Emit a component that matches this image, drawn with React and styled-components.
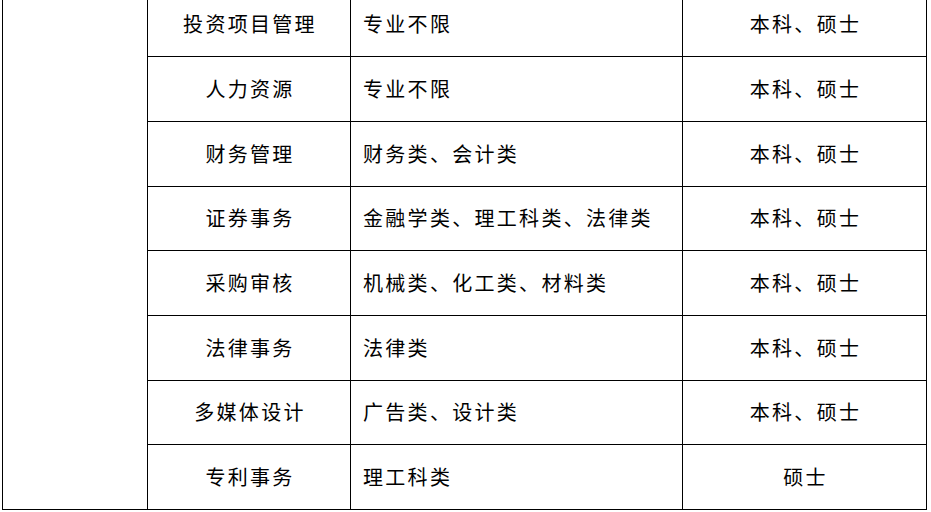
import React from 'react';
import styled, { createGlobalStyle } from "styled-components";

const rows = [
    { job: '投资项目管理', major: '专业不限', degree: '本科、硕士', h: 65 },
    { job: '人力资源', major: '专业不限', degree: '本科、硕士', h: 65 },
    { job: '财务管理', major: '财务类、会计类', degree: '本科、硕士', h: 65 },
    { job: '证券事务', major: '金融学类、理工科类、法律类', degree: '本科、硕士', h: 64 },
    { job: '采购审核', major: '机械类、化工类、材料类', degree: '本科、硕士', h: 65 },
    { job: '法律事务', major: '法律类', degree: '本科、硕士', h: 65 },
    { job: '多媒体设计', major: '广告类、设计类', degree: '本科、硕士', h: 64 },
    { job: '专利事务', major: '理工科类', degree: '硕士', h: 65 },
];

export default function App(){
    return(
        <>
            <GlobalStyle/>
            <Page>
                <Table>
                    <Merged/>
                    {rows.map((row) => (
                        <React.Fragment key={row.job}>
                            <Cell h={row.h}>{row.job}</Cell>
                            <Cell h={row.h} $left>{row.major}</Cell>
                            <Cell h={row.h}>{row.degree}</Cell>
                        </React.Fragment>
                    ))}
                </Table>
            </Page>
        </>
    )
}

const GlobalStyle = createGlobalStyle`
  html, body {
    margin: 0;
    padding: 0;
    background: #ffffff;
  }
  body {
    font-family: "Noto Sans CJK SC", "Noto Sans", sans-serif;
    color: #000000;
  }
`;

const Page = styled.div`
  width: 931px;
  height: 512px;
  overflow: hidden;
  padding-left: 2px;
  box-sizing: border-box;
`;

const Table = styled.div`
  display: grid;
  grid-template-columns: 145px 203px 332px 244px;
  margin-top: -9px;
  border-left: 1px solid #000;
  border-top: 1px solid #000;
  width: max-content;
`;

const Merged = styled.div`
  grid-row: span 8;
  border-right: 1px solid #000;
  border-bottom: 1px solid #000;
`;

const Cell = styled.div`
  height: ${props => props.h}px;
  box-sizing: border-box;
  border-right: 1px solid #000;
  border-bottom: 1px solid #000;
  padding-bottom: 2px;
  display: flex;
  align-items: center;
  justify-content: ${props => props.$left ? 'flex-start' : 'center'};
  padding-left: ${props => props.$left ? '12px' : '2px'};
  font-size: 20px;
  letter-spacing: 2.3px;
  white-space: nowrap;
`;
